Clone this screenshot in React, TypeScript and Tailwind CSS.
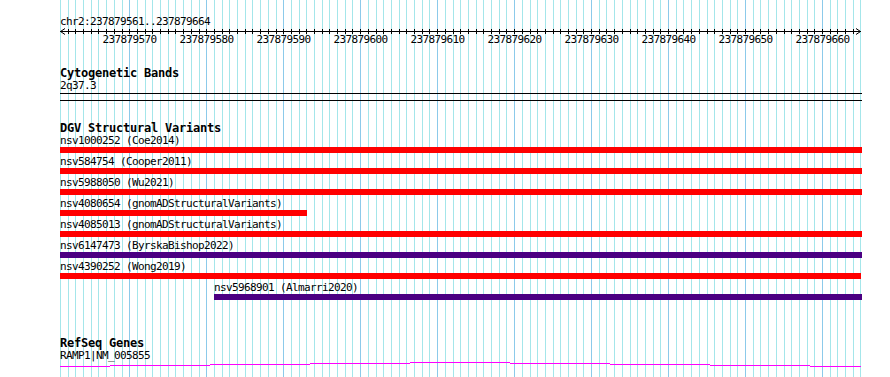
import React from 'react'

const PX_PER_BP = 7.697
const START_BP = 237879561
const TRACK_W = 802

// x of each base inside the track (track starts at page x=60)
const bpX = (i: number) => Math.round(60 + PX_PER_BP * i) + 0.5 - 60

const variants = [
  { id: 'nsv1000252', study: 'Coe2014', bar: 'bg-[#ff0000]', left: 0, width: 802 },
  { id: 'nsv584754', study: 'Cooper2011', bar: 'bg-[#ff0000]', left: 0, width: 802 },
  { id: 'nsv5988050', study: 'Wu2021', bar: 'bg-[#ff0000]', left: 0, width: 802 },
  { id: 'nsv4080654', study: 'gnomADStructuralVariants', bar: 'bg-[#ff0000]', left: 0, width: 247 },
  { id: 'nsv4085013', study: 'gnomADStructuralVariants', bar: 'bg-[#ff0000]', left: 0, width: 802 },
  { id: 'nsv6147473', study: 'ByrskaBishop2022', bar: 'bg-[#4b0082]', left: 0, width: 802 },
  { id: 'nsv4390252', study: 'Wong2019', bar: 'bg-[#ff0000]', left: 0, width: 801 },
  { id: 'nsv5968901', study: 'Almarri2020', bar: 'bg-[#4b0082]', left: 154, width: 648 },
]

// intron connector of RAMP1, stepped like the original raster
const geneSteps = [
  [0, 50, 4], [50, 150, 3], [150, 250, 2], [250, 350, 1], [350, 450, 0],
  [450, 550, 1], [550, 650, 2], [650, 750, 3], [750, 801, 4],
]

function Grid() {
  const lines = Array.from({ length: 105 }, (_, i) => i)
  return (
    <svg className="absolute inset-0 pointer-events-none" width={890} height={377} shapeRendering="crispEdges">
      {lines.map((i) => (
        <line key={i} x1={bpX(i) + 60} x2={bpX(i) + 60} y1={0} y2={377}
          stroke={i % 10 === 9 ? '#8ccaea' : '#a4e6ea'} strokeWidth={1} />
      ))}
    </svg>
  )
}

function Ruler() {
  const ticks = Array.from({ length: 103 }, (_, i) => i + 1)
  const labels = Array.from({ length: 10 }, (_, k) => 9 + k * 10)
  return (
    <div className="relative h-[18px] w-[802px]">
      <svg className="absolute left-0 top-0" width={802} height={8} shapeRendering="crispEdges">
        <line x1={0} x2={801} y1={3.5} y2={3.5} stroke="#000" />
        {ticks.map((i) => (
          <line key={i} x1={bpX(i)} x2={bpX(i)} y1={1} y2={6} stroke="#000" />
        ))}
        <polyline points="5,0.5 0.5,3.5 5,6.5" fill="none" stroke="#000" shapeRendering="auto" />
        <polyline points="796,0.5 800.5,3.5 796,6.5" fill="none" stroke="#000" shapeRendering="auto" />
      </svg>
      {labels.map((i) => (
        <span key={i} className="absolute top-[6px] h-[12px] leading-[12px] -translate-x-1/2 whitespace-nowrap"
          style={{ left: bpX(i) }}>
          {START_BP + i}
        </span>
      ))}
    </div>
  )
}

function Title({ children, className = '' }: { children: React.ReactNode; className?: string }) {
  return (
    <div className={`h-[13px] leading-[13px] text-[12px] font-bold tracking-[-0.22px] whitespace-nowrap ${className}`}>
      {children}
    </div>
  )
}

export default function App() {
  return (
    <div className="relative w-[890px] h-[377px] overflow-hidden bg-white text-black"
      style={{ fontFamily: '"DejaVu Sans Mono", "Liberation Mono", monospace' }}>
      <Grid />
      <div className="relative pl-[60px] pt-[16px] text-[11px] tracking-[-0.62px]">
        <div className="h-[12px] leading-[12px]">chr2:237879561..237879664</div>
        <Ruler />

        <Title className="mt-[21px]">Cytogenetic Bands</Title>
        <div className="h-[12px] leading-[12px]">2q37.3</div>
        <div className="mt-[1px] h-[1px] w-[802px] bg-black" />
        <div className="mt-[6px] h-[1px] w-[802px] bg-black" />

        <Title className="mt-[21px]">DGV Structural Variants</Title>
        <div className="flex flex-col gap-[3px] w-[802px]">
          {variants.map((v) => (
            <div key={v.id} style={{ paddingLeft: v.left }}>
              <div className="h-[12px] leading-[12px] whitespace-nowrap">{v.id} ({v.study})</div>
              <div className={`h-[6px] ${v.bar}`} style={{ width: v.width }} />
            </div>
          ))}
        </div>

        <Title className="mt-[37px]">RefSeq Genes</Title>
        <div className="h-[12px] leading-[12px]">RAMP1|NM_005855</div>
        <svg width={TRACK_W} height={6} shapeRendering="crispEdges" className="block">
          {geneSteps.map(([a, b, y]) => (
            <line key={a} x1={a} x2={b} y1={y + 0.5} y2={y + 0.5} stroke="#ff00ff" />
          ))}
        </svg>
      </div>
    </div>
  )
}
